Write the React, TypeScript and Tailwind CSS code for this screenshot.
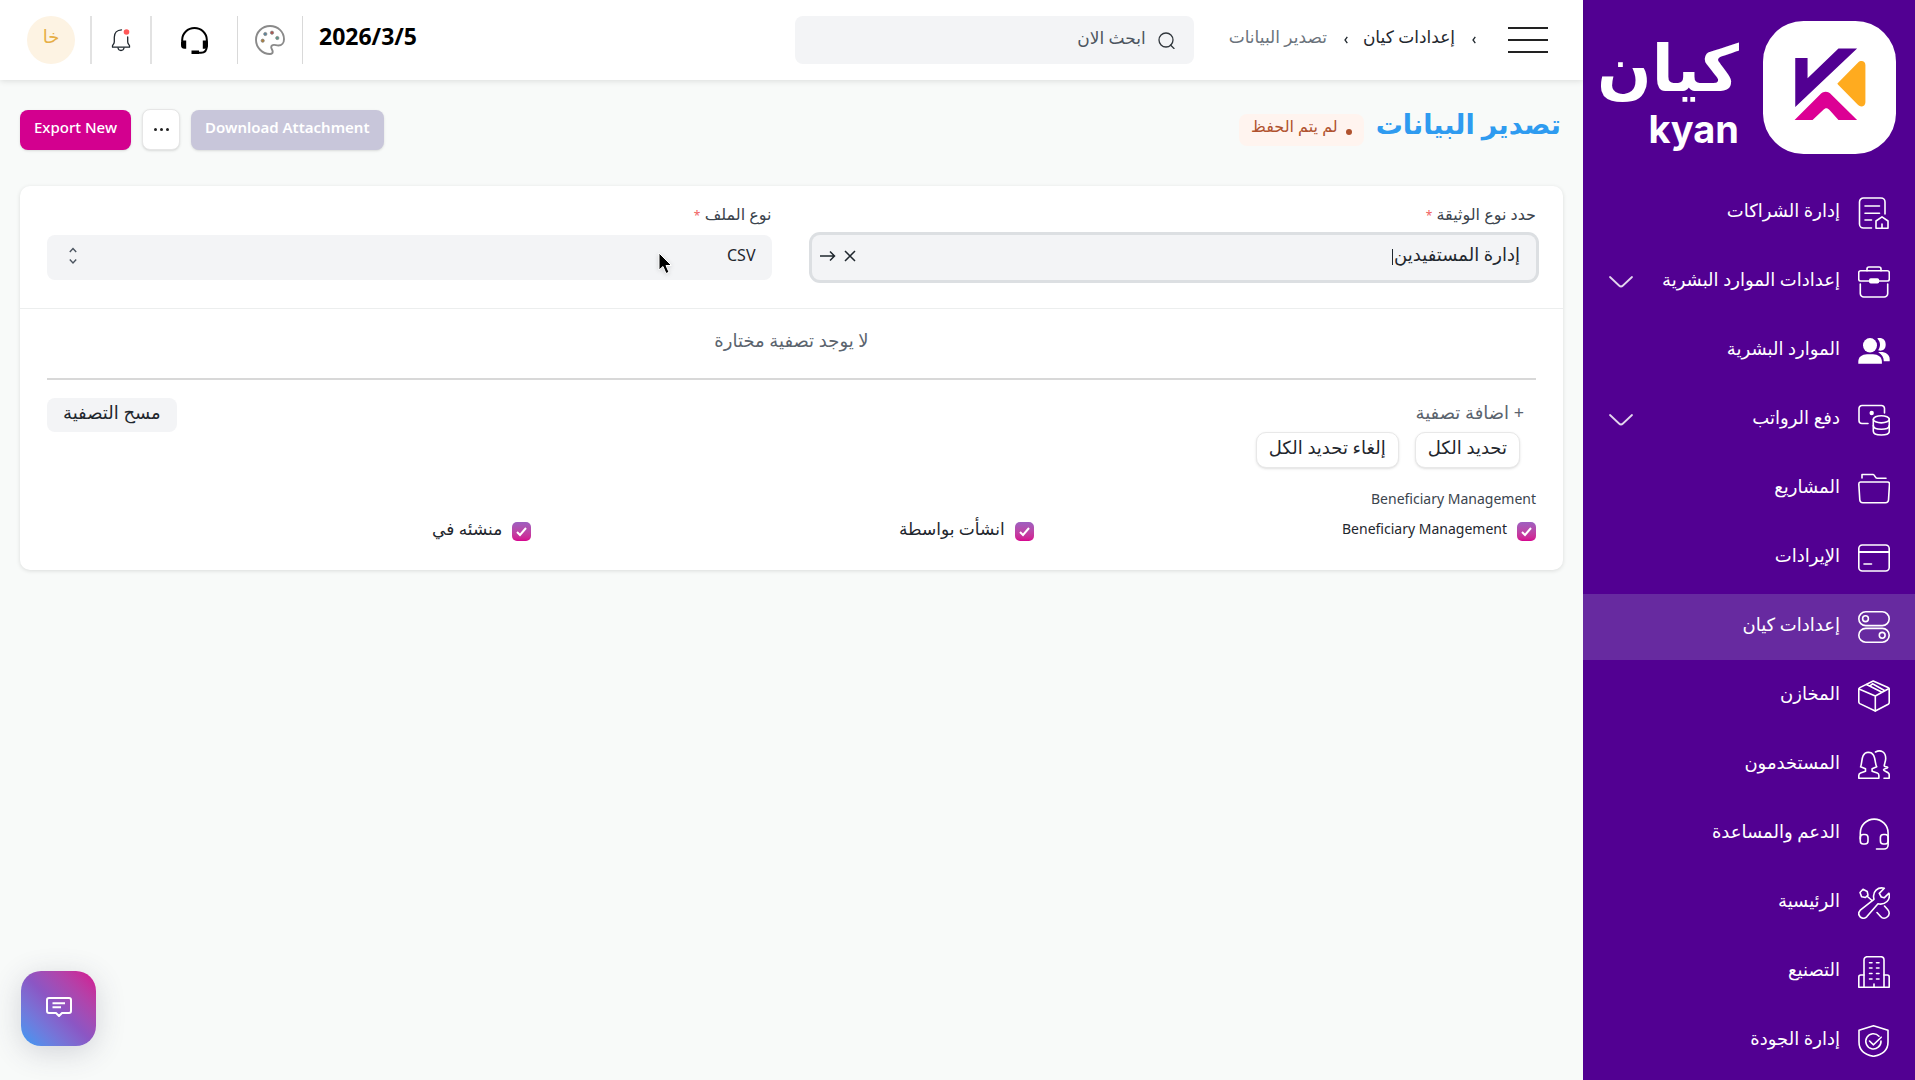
import React, { useState } from "react";
import type { FC, ReactNode } from "react";

type IconProps = {
  children: ReactNode;
};

const MenuIcon: FC<IconProps> = ({ children }) => (
  <svg
    viewBox="0 0 32 32"
    className="size-8 shrink-0"
    fill="none"
    stroke="currentColor"
    strokeWidth="1.6"
    strokeLinecap="round"
    strokeLinejoin="round"
    aria-hidden="true"
  >
    {children}
  </svg>
);

type MenuItem = {
  label: string;
  icon: ReactNode;
  expandable?: boolean;
  active?: boolean;
};

const menuItems: MenuItem[] = [
  {
    label: "إدارة الشراكات",
    icon: (
      <>
        <path d="M27 17V5a4 4 0 0 0-4-4H5.500a4 4 0 0 0-4 4v22a4 4 0 0 0 4 4H13.500" />
        <path d="M7 9h14.500M7 16.300h14.500M7 23h6.500" />
        <path d="M18 31.200v-7.200l6-4.200 6 4.200v7.200zM24 31v-4" />
      </>
    ),
  },
  {
    label: "إعدادات الموارد البشرية",
    expandable: true,
    icon: (
      <>
        <path d="M9 4.700V3a2 2 0 0 1 2-2h10a2 2 0 0 1 2 2v1.700" />
        <path d="M11.500 15H2.700a2 2 0 0 1-2-2V6.700a2 2 0 0 1 2-2h26.600a2 2 0 0 1 2 2V13a2 2 0 0 1-2 2h-8.800" />
        <rect x="11.800" y="13" width="8.600" height="3.800" rx="1" fill="currentColor" />
        <path d="M2.300 18v9.500a3.500 3.500 0 0 0 3.500 3.500h20.400a3.500 3.500 0 0 0 3.500-3.500V18" />
      </>
    ),
  },
  {
    label: "الموارد البشرية",
    icon: (
      <g fill="currentColor" stroke="none">
        <ellipse cx="12" cy="10.300" rx="7" ry="7.300" />
        <path d="M.3 28.700v-2c0-4.600 3.700-7.400 8.700-7.400h6c5 0 8.900 2.800 8.900 7.400v2z" />
        <path d="M19.300 3.400c2.600-.8 8.400-.3 8.400 6.100s-5 6.800-7.500 5.700c2.600-3.900 2.500-8.200-.9-11.800z" />
        <path d="M20.200 17.300c6.300-1 11.500 1.700 11.500 7v2h-5.900c0-4-2-7-5.600-9z" />
      </g>
    ),
  },
  {
    label: "دفع الرواتب",
    expandable: true,
    icon: (
      <>
        <path d="M26.500 9V4.500a3 3 0 0 0-3-3H4a3 3 0 0 0-3 3v12a3 3 0 0 0 3 3h6" />
        <circle cx="13.700" cy="9" r="2.200" fill="currentColor" stroke="none" />
        <ellipse cx="23.300" cy="15.300" rx="8" ry="3.600" />
        <path d="M15.300 15.300v12c0 2.200 3.500 3.700 8 3.700s8-1.500 8-3.700v-12" />
        <path d="M15.300 21.500c0 2.200 3.500 3.700 8 3.700s8-1.500 8-3.700" />
      </>
    ),
  },
  {
    label: "المشاريع",
    icon: (
      <>
        <path d="M4 5V1.500h11.200c1.300 0 2 3.800 3.800 3.800h9" />
        <path d="M2.500 9h27a2 2 0 0 1 2 2l-1 16a3 3 0 0 1-3 2.700H4.800a3 3 0 0 1-3-2.700L.8 11a2 2 0 0 1 1.700-2z" />
      </>
    ),
  },
  {
    label: "الإيرادات",
    icon: (
      <>
        <rect x=".8" y="3" width="30.400" height="26" rx="3.500" />
        <path d="M1 10h30" strokeWidth="2" />
        <path d="M6 22h7.500" />
      </>
    ),
  },
  {
    label: "إعدادات كيان",
    active: true,
    icon: (
      <>
        <rect x=".8" y=".8" width="30.400" height="13.800" rx="6.900" />
        <rect x=".8" y="17.400" width="30.400" height="13.800" rx="6.900" />
        <circle cx="7.500" cy="7.700" r="2.900" />
        <circle cx="24.200" cy="24.300" r="2.900" />
      </>
    ),
  },
  {
    label: "المخازن",
    icon: (
      <>
        <path d="M15.200 1L30 7.600a2 2 0 0 1 1.200 1.800V22.500a2 2 0 0 1-1 1.700L17.300 31 1.800 23.600a2 2 0 0 1-1-1.800V9.400a2 2 0 0 1 1-1.800z" />
        <path d="M1 9l16.300 7L31 8.500M17.300 16v15M8.500 4.500l15.500 7.800M12 5.800l2.500-2 11.500 6.500" />
      </>
    ),
  },
  {
    label: "المستخدمون",
    icon: (
      <>
        <path d="M7.500 22.300v-2.500L2.600 17.800C4.500 14.500 2.500 3.600 10.300 3.300c8.200 0 6 11 8.400 14.500l-4.600 2v2.500l5.200 1.700c1.100.4 1.600 1.200 1.600 2.400v2.900H.8v-2.900c0-1.200.6-2 1.700-2.400z" />
        <path d="M17.500 3c5-2.800 10.200-.3 10.200 6.500 0 3-1.500 5.500-1.500 7.500 0 1 3.600.6 3.600 1.400 0 1-4.300 1.300-4.300 2.400 0 1.500 5.700 2 5.700 4.600v3.900H26" />
      </>
    ),
  },
  {
    label: "الدعم والمساعدة",
    icon: (
      <>
        <path d="M2.300 21v-6a13.900 13.900 0 0 1 27.800 0v12a4 4 0 0 1-4 4H18.500" />
        <rect x="2.300" y="16.500" width="7.700" height="9.500" rx="3" />
        <rect x="22.400" y="16.500" width="7.700" height="9.500" rx="3" />
      </>
    ),
  },
  {
    label: "الرئيسية",
    icon: (
      <>
        <path d="M26.300 1.300c-6-1.800-12.500 3-10.300 11L2.300 23.200c-4.200 4.500 1.800 11 6.400 6.600L20 16.800c7.500 1.500 12.800-4 11-10.600l-4.800 4.600-2.900-.8-2-3.600z" />
        <path d="M2 5.500L5 2.300l4.200 2.200.8 3.600-2.600 2.400-3.800-.8zM9.500 9.500l4.500 4" />
        <path d="M19 25.500l3.600 4c4 4.500 12-1.500 7-7L26.500 19" />
      </>
    ),
  },
  {
    label: "التصنيع",
    icon: (
      <>
        <path d="M6 31V4a3.300 3.300 0 0 1 3.300-3.300h13.400A3.300 3.300 0 0 1 26 4v27" />
        <path d="M6 19H2.800a2 2 0 0 0-2 2v10.200h30.400V21a2 2 0 0 0-2-2H26M16 28v3" />
        <path d="M11.500 6.700h2.500M18.500 6.700H21M11.500 12H14M18.500 12H21M11.500 17.500H14M18.500 17.500H21M11.500 23H14M18.500 23H21" />
      </>
    ),
  },
  {
    label: "إدارة الجودة",
    icon: (
      <>
        <path d="M15.500.8L30 5.200V17c0 8-6 12.800-14.500 14.300C7 29.800 1 25 1 17V5.200z" />
        <path d="M21 11.200a7.600 7.600 0 1 0 2 4.800" />
        <path d="M11.500 16l4 3.800 7.700-7.600" />
      </>
    ),
  },
];

const fields = [
  { label: "Beneficiary Management", size: "pb-1 text-[14px]" },
  { label: "انشأت بواسطة", size: "pb-1 text-[17px]" },
  { label: "منشئه في", size: "pb-1 text-[17px]" },
];

const Logo: FC = () => (
  <a href="#" className="flex items-start justify-end gap-6 pl-5" dir="ltr">
    <span className="flex flex-col items-end pt-8 font-bold text-white">
      <span className="font-['DejaVu_Sans',sans-serif] text-[64px] leading-[74px]">كيان</span>
      <span className="font-['Inter',sans-serif] text-[38px] leading-[46px]">kyan</span>
    </span>
    <svg viewBox="0 0 400 400" className="mt-[21px] mr-[19px] size-[133px] shrink-0" aria-hidden="true">
      <rect width="400" height="400" rx="122" fill="#fff" />
      <path d="M97 111h37v61l93-89h56L97 259z" fill="#520092" />
      <path d="M226 186l60-61c8-8 22-5 22 7v112c0 12-13 17-22 9l-60-61c-3-3-3-4 0-6z" fill="#ffab1f" />
      <path d="M95 298l76-76c9-12 26-12 35 0l77 76h-56l-27-30c-7-7-12-7-19 0l-32 30z" fill="#dc0094" />
    </svg>
  </a>
);

const Sidebar: FC = () => (
  <aside className="w-[332px] shrink-0 bg-[#520092] text-white">
    <div className="h-[180px]">
      <Logo />
    </div>
    <nav className="flex flex-col gap-[3px]">
      {menuItems.map((item) => (
        <a
          key={item.label}
          href="#"
          className={
            item.active
              ? "flex h-[66px] items-center gap-[18px] bg-[#672aa0] pr-[25px] pl-[26px]"
              : "flex h-[66px] items-center gap-[18px] pr-[25px] pl-[26px]"
          }
        >
          <MenuIcon>{item.icon}</MenuIcon>
          <span className="flex-1 pb-1.5 text-[18px] leading-6 whitespace-nowrap">{item.label}</span>
          {item.expandable && (
            <svg viewBox="0 0 24 12" className="h-3 w-6 shrink-0" fill="none" stroke="#e3d6ee" strokeWidth="1.800" strokeLinecap="round" aria-hidden="true">
              <path d="M1 1l9 8.500c1.500 1.400 2.500 1.400 4 0L23 1" />
            </svg>
          )}
        </a>
      ))}
    </nav>
  </aside>
);

const Crumb: FC = () => (
  <svg viewBox="0 0 4 8" className="ml-[2px] h-2 w-1" fill="none" stroke="#1f272e" strokeWidth="1.300" aria-hidden="true">
    <path d="M3.300.8L1 4l2.300 3.200" />
  </svg>
);

const Header: FC = () => (
  <header className="relative flex h-20 items-center bg-white pr-[35px] pl-[27px] shadow-[0_1px_6px_rgba(0,0,0,0.12)]">
    <button type="button" aria-label="القائمة" className="flex w-10 flex-col gap-[10px]">
      <span className="h-[2px] bg-[#222]" />
      <span className="h-[2px] bg-[#222]" />
      <span className="h-[2px] bg-[#222]" />
    </button>
    <nav className="mr-8 flex items-center gap-[15px] text-[17px] leading-5 whitespace-nowrap">
      <Crumb />
      <a href="#" className="pb-1.5 text-[#1f272e]">إعدادات كيان</a>
      <Crumb />
      <a href="#" className="pb-1.5 text-[#6b737c]">تصدير البيانات</a>
    </nav>
    <label className="mr-[35px] flex h-12 w-[399px] items-center gap-3 rounded-lg bg-[#f3f4f6] pr-[19px] pl-4">
      <svg viewBox="0 0 17 17" className="size-[17px] shrink-0" fill="none" stroke="#30363c" strokeWidth="1.300" strokeLinecap="round" aria-label="بحث">
        <circle cx="8" cy="8" r="7" />
        <path d="M12.500 13l3.500 3.500" />
      </svg>
      <input
        type="text"
        placeholder="ابحث الان"
        className="h-8 w-full bg-transparent pb-1.5 text-[17px] outline-none placeholder:text-[#4c5560]"
      />
    </label>
    <div className="mr-auto flex items-center">
      <span dir="ltr" className="pb-2 text-[23px] leading-8 font-bold text-black">2026/3/5</span>
      <span className="mr-4 h-12 w-px bg-[#d9d9d9]" />
      <button type="button" aria-label="المظهر" className="mr-[17px]">
        <svg viewBox="0 0 30 30" className="size-[30px]" fill="none" aria-hidden="true">
          <path d="M15 1C7.200 1 1 7.100 1 14.800 1 22.500 7.200 29 15 29c1.800 0 2.700-.9 2.700-2.200 0-2-1.500-3-1.500-4.600 0-1.500 1.200-2.400 2.900-2.300 1.400.1 2.600.6 4.200.6 3.600 0 5.700-2.800 5.700-6.300C29 6.800 23 1 15 1z" stroke="#8a8a8a" strokeWidth="1.900" />
          <g stroke="#808080" strokeWidth=".8">
            <circle cx="10.300" cy="9" r="1.600" fill="#5a86a0" />
            <circle cx="17" cy="7.700" r="1.600" fill="#b2524c" />
            <circle cx="22.300" cy="13" r="1.600" fill="#5a9a8c" />
            <circle cx="7.700" cy="15.700" r="1.600" fill="#b08038" />
          </g>
        </svg>
      </button>
      <span className="mr-[17px] h-12 w-px bg-[#d9d9d9]" />
      <button type="button" aria-label="الدعم" className="mr-[29px]">
        <svg viewBox="0 0 27 27" className="size-[27px]" fill="none" stroke="#000" strokeWidth="2" aria-hidden="true">
          <path d="M1.200 14v-1.200a12.300 11.800 0 0 1 24.600 0V19c0 4-1.800 6.800-5.800 6.800h-2" />
          <path d="M1 13.500h4.200v8.300H3.500C1 21.800 0 20.500 0 18v-2c0-1.500.3-2.500 1-2.500zM26 13.500h-4.200v8.300h1.700c2.500 0 3.500-1.300 3.500-3.800v-2c0-1.500-.3-2.500-1-2.500zM10.500 23.500H18V27h-7.500z" fill="#000" stroke="none" />
        </svg>
      </button>
      <span className="mr-[29px] h-12 w-[2px] bg-[#e2e2e2]" />
      <button type="button" aria-label="الإشعارات" className="mr-[19px]">
        <svg viewBox="0 0 20 24" className="h-6 w-5" fill="none" stroke="#1f272e" strokeWidth="1.300" strokeLinecap="round" strokeLinejoin="round" aria-hidden="true">
          <path d="M10.500 1.800C6 2 3.300 5 3.300 9.200v4.500c0 1.800-.8 2.500-1.500 3.500-.5.800-.3 2-.3 2h17c0-.9.300-1.300-.3-2-.7-1-1.500-1.700-1.500-3.500V9" />
          <path d="M7 20c.3 1.600 1.500 2.500 3 2.500s2.700-.9 3-2.500" />
          <circle cx="15.500" cy="4" r="2.800" fill="#ff5858" stroke="none" />
        </svg>
      </button>
      <span className="mr-[19px] h-12 w-[2px] bg-[#e2e2e2]" />
      <button type="button" className="mr-[15px] size-12 rounded-full bg-[#fdf3e3] pb-2 text-[18px] text-[#e6ae45]">خا</button>
    </div>
  </header>
);

const Toolbar: FC = () => (
  <div className="flex items-center pt-[29px] pr-[22px] pl-5">
    <h1 className="pb-3 text-[27px] leading-7 font-bold whitespace-nowrap text-[#2e9bf0]">تصدير البيانات</h1>
    <span className="mr-3 flex h-8 items-center gap-2 rounded-lg bg-[#fff4ef] px-3 text-[16px] whitespace-nowrap text-[#b0522e]">
      <span className="mt-1 size-[6px] rounded-full bg-[#b0522e]" />
      <span className="pb-2">لم يتم الحفظ</span>
    </span>
    <div className="mr-auto flex items-center gap-[11px] text-[15px]">
      <button type="button" disabled className="h-10 rounded-lg bg-[#c8c6da] px-[14px] pb-1 font-semibold text-white shadow-sm">
        Download Attachment
      </button>
      <button type="button" aria-label="المزيد" className="flex h-[41px] w-[38px] items-center justify-center gap-[3px] rounded-lg border border-[#e6e6e6] bg-white shadow-sm">
        <span className="size-[3px] rounded-full bg-[#222]" />
        <span className="size-[3px] rounded-full bg-[#222]" />
        <span className="size-[3px] rounded-full bg-[#222]" />
      </button>
      <button type="button" className="h-10 rounded-lg bg-[#d3008f] px-[14px] pb-1 font-medium text-white shadow-sm">
        Export New
      </button>
    </div>
  </div>
);

const ExportForm: FC = () => {
  const [docType, setDocType] = useState("إدارة المستفيدين");
  const [checked, setChecked] = useState([true, true, true]);

  const toggle = (index: number) => {
    setChecked(checked.map((value, i) => (i === index ? !value : value)));
  };

  return (
    <form className="mx-5 mt-9 rounded-[10px] bg-white shadow-[0_1px_4px_rgba(0,0,0,0.12)]">
      <div className="grid grid-cols-2 gap-10 border-b border-[#eceeee] px-[27px] pt-4 pb-7 text-[#3b444d]">
        <div className="flex flex-col gap-[9px]">
          <label htmlFor="doc-type" className="h-6 text-[16px] leading-6">
            حدد نوع الوثيقة <span className="text-[12px] text-[#f0625f]">*</span>
          </label>
          <div className="relative flex h-[45px] items-center rounded-lg bg-[#f3f4f6] pr-4 pl-2 ring-[3px] ring-[#dcdfe2]">
            <input
              id="doc-type"
              type="text"
              value={docType}
              onChange={(e) => setDocType(e.target.value)}
              className="h-9 min-w-0 flex-1 bg-transparent pb-2 text-[18px] text-[#1f272e] outline-none"
            />
            <span className="absolute top-[14px] right-[143px] h-4 w-px bg-[#1f272e]" />
            <button type="button" aria-label="مسح" className="ml-2">
              <svg viewBox="0 0 12 12" className="mb-1 size-3" stroke="#1f272e" strokeWidth="1.500" aria-hidden="true">
                <path d="M1 1l10 10M11 1L1 11" />
              </svg>
            </button>
            <button type="button" aria-label="فتح">
              <svg viewBox="0 0 16 12" className="mb-1 h-3 w-4" fill="none" stroke="#1f272e" strokeWidth="1.500" aria-hidden="true">
                <path d="M0 6h14M10 1.500L14.500 6 10 10.500" />
              </svg>
            </button>
          </div>
        </div>
        <div className="flex flex-col gap-[9px]">
          <label htmlFor="file-type" className="h-6 text-[16px] leading-6">
            نوع الملف <span className="text-[12px] text-[#f0625f]">*</span>
          </label>
          <div className="relative">
            <select
              id="file-type"
              className="h-[45px] w-full appearance-none rounded-lg bg-[#f3f4f6] pr-4 pb-1.5 pl-10 text-[16px] text-[#1f272e] outline-none"
            >
              <option>CSV</option>
              <option>Excel</option>
            </select>
            <svg viewBox="0 0 8 18" className="pointer-events-none absolute top-3 left-[22px] h-[18px] w-2" fill="none" stroke="#4c5560" strokeWidth="1.400" aria-hidden="true">
              <path d="M.8 5L4 1.500 7.200 5M.8 12.500L4 16l3.200-3.500" />
            </svg>
          </div>
        </div>
      </div>
      <div className="px-[27px]">
        <p className="h-[71px] border-b-2 border-[#d8d8d8] pt-[19px] text-center text-[18px] leading-6 text-[#5b646e]">
          لا يوجد تصفية مختارة
        </p>
        <div className="flex items-start justify-between pt-[18px]">
          <button type="button" className="pr-3 text-[18px] leading-7 text-[#5b646e]">+ اضافة تصفية</button>
          <button type="button" className="h-[34px] rounded-lg bg-[#f3f4f6] px-4 pb-1.5 text-[18px] text-[#1f272e]">
            مسح التصفية
          </button>
        </div>
        <div className="flex gap-4 pr-4 text-[18px] text-[#1f272e]">
          <button type="button" className="h-9 rounded-[10px] border border-[#e8e8e8] bg-white px-3 pb-1.5 shadow-sm">
            تحديد الكل
          </button>
          <button type="button" className="h-9 rounded-[10px] border border-[#e8e8e8] bg-white px-3 pb-1.5 shadow-sm">
            إلغاء تحديد الكل
          </button>
        </div>
        <p className="pt-[19px] text-[14px] leading-6 text-[#3b444d]">Beneficiary Management</p>
        <div className="grid grid-cols-3 gap-[18px] pt-1.5 pb-[25px]">
          {fields.map((field, index) => (
            <label key={field.label} className="flex h-7 items-center gap-[10px] leading-6 text-[#1f272e]">
              <span className="relative size-[19px]">
                <input
                  type="checkbox"
                  checked={checked[index]}
                  onChange={() => toggle(index)}
                  className="peer block size-[19px] appearance-none rounded-[5px] border border-gray-300 checked:border-0 checked:bg-linear-to-b checked:from-[#9d5fc0] checked:to-[#d6008f]"
                />
                <svg viewBox="0 0 19 19" className="pointer-events-none absolute inset-0 hidden size-[19px] peer-checked:block" fill="none" stroke="#fff" strokeWidth="2" aria-hidden="true">
                  <path d="M5 10l3 3 6-7" />
                </svg>
              </span>
              <span className={field.size}>{field.label}</span>
            </label>
          ))}
        </div>
      </div>
    </form>
  );
};

const App: FC = () => (
  <div
    dir="rtl"
    lang="ar"
    className="flex min-h-screen bg-[#f8faf9] font-['Noto_Sans','DejaVu_Sans',sans-serif]"
  >
    <Sidebar />
    <main className="min-w-0 flex-1">
      <Header />
      <Toolbar />
      <ExportForm />
    </main>
    <button
      type="button"
      aria-label="محادثة"
      className="fixed bottom-[34px] left-[21px] flex size-[75px] items-center justify-center rounded-[20px] bg-linear-to-tr from-[#2a9bf5] via-[#8b56c4] to-[#d6008f] shadow-[0_6px_30px_rgba(60,60,90,0.2)]"
    >
      <svg viewBox="0 0 26 20" className="mb-1 h-5 w-[26px]" fill="none" stroke="#fff" strokeWidth="2" strokeLinejoin="round" aria-hidden="true">
        <path d="M3 1h20a2 2 0 0 1 2 2v11a2 2 0 0 1-2 2h-7l-3 3-3-3H3a2 2 0 0 1-2-2V3a2 2 0 0 1 2-2z" />
        <path d="M6.500 6.200H19M6.500 10.300H15" />
      </svg>
    </button>
    <svg viewBox="0 0 16 24" className="pointer-events-none fixed top-[252px] left-[658px] h-6 w-4 drop-shadow-sm" aria-hidden="true">
      <path d="M1 1v17l4-3.500 3 7 3-1.300-3-6.700h5.500z" fill="#000" stroke="#fff" strokeWidth="1" />
    </svg>
  </div>
);

export default App;
